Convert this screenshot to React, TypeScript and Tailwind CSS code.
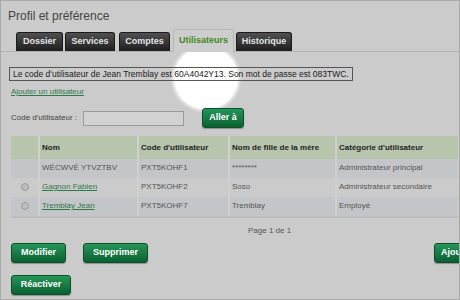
import React from "react";

const tabs = [
  { label: "Dossier", w: "w-[47px]", ml: "ml-0" },
  { label: "Services", w: "w-[50px]", ml: "ml-[2px]" },
  { label: "Comptes", w: "w-[51px]", ml: "ml-[4px]" },
  { label: "Utilisateurs", w: "w-[61px]", ml: "ml-[3px]" },
  { label: "Historique", w: "w-[56px]", ml: "ml-[2px]" },
];

const rows = [
  { radio: false, name: "WÉCWVÉ YTVZTBV", link: false, code: "PXT5KOHF1", mother: "********", cat: "Administrateur principal", shade: true },
  { radio: true, name: "Gagnon Fabien", link: true, code: "PXT5KOHF2", mother: "Soso", cat: "Administrateur secondaire", shade: false },
  { radio: true, name: "Tremblay Jean", link: true, code: "PXT5KOHF7", mother: "Tremblay", cat: "Employé", shade: true },
];

const GreenButton: React.FC<{ label: string; className?: string }> = ({ label, className }) => (
  <button
    className={`h-[20px] shrink-0 rounded-[3px] border border-[#0b4f2b] bg-gradient-to-b from-[#259659] to-[#0a6030] text-[9px] font-bold text-white shadow-[0_1px_1px_rgba(0,0,0,0.3)] ${className ?? ""}`}
  >
    {label}
  </button>
);

export default function App() {
  return (
    <div
      className="relative h-[300px] w-[460px] overflow-hidden border border-[#a9a9a9] bg-[#cbcbcb] text-[#444]"
      style={{ fontFamily: '"Liberation Sans", Arial, sans-serif' }}
    >
      {/* spotlight over the user code */}
      <div className="absolute left-[173px] top-[46px] h-[62px] w-[64px] rounded-full bg-white shadow-[0_0_3px_2px_rgba(255,255,255,0.7)]" />

      <div className="relative">
        <div className="pl-[7px] pt-[7px] text-[12px] leading-[16px] text-[#444]">Profil et préférence</div>

        {/* tabs */}
        <div className="mt-[5px] flex h-[23px] items-end border-b border-[#b3b3b3] pl-[15px]">
          {tabs.map((t) =>
            t.label === "Utilisateurs" ? (
              <div
                key={t.label}
                className={`mb-[-1px] flex h-[23px] shrink-0 items-center justify-center rounded-t-[3px] border border-b-0 border-[#b8b8b8] bg-[#cdcdcd] text-[9px] font-bold text-[#3f8a1c] ${t.w} ${t.ml}`}
              >
                {t.label}
              </div>
            ) : (
              <div
                key={t.label}
                className={`flex h-[19px] shrink-0 items-center justify-center rounded-t-[3px] border border-b-0 border-[#1a1a1a] bg-gradient-to-b from-[#505050] to-[#1f1f1f] text-[9px] font-bold text-[#e4e4e4] ${t.w} ${t.ml}`}
              >
                {t.label}
              </div>
            )
          )}
        </div>

        {/* message */}
        <div className="ml-[8px] mt-[15px] inline-block h-[14px] border border-[#555] px-[3px] text-[8.5px] leading-[12px] text-[#1a1a1a]">
          Le code d'utilisateur de Jean Tremblay est 60A4042Y13. Son mot de passe est 083TWC.
        </div>

        <div className="ml-[10px] mt-[3px] text-[8px] leading-[10px] text-[#2b7a4b] underline">Ajouter un utilisateur</div>

        {/* search */}
        <div className="ml-[10px] mt-[11px] flex h-[20px] items-center">
          <span className="w-[72px] text-[8px] text-[#444]">Code d'utilisateur :</span>
          <div className="h-[15px] w-[101px] border border-[#9a9a9a] bg-[#d2d2d2]" />
          <GreenButton label="Aller à" className="ml-[18px] w-[42px]" />
        </div>

        {/* table */}
        <div className="ml-[10px] mt-[8px] w-[447px] border-b-2 border-[#bdbdbd] text-[8px]">
          <div className="grid h-[23px] grid-cols-[29px_99px_91px_107px_121px] bg-[#b8c5ad] font-bold text-[#1e1e1e]">
            <div className="border-r-2 border-[#d0d0d0]" />
            <div className="flex items-center border-r-2 border-[#d0d0d0] pl-[2px]">Nom</div>
            <div className="flex items-center border-r-2 border-[#d0d0d0] pl-[2px]">Code d'utilisateur</div>
            <div className="flex items-center border-r-2 border-[#d0d0d0] pl-[2px]">Nom de fille de la mère</div>
            <div className="flex items-center pl-[2px]">Catégorie d'utilisateur</div>
          </div>
          {rows.map((r) => (
            <div
              key={r.code}
              className={`grid h-[19px] grid-cols-[29px_99px_91px_107px_121px] text-[#555] ${r.shade ? "bg-[#c4c5c9]" : "bg-[#cbcbcb]"}`}
            >
              <div className="flex items-start justify-center border-r-2 border-[#d0d0d0] pt-[5px]">
                {r.radio && <span className="h-[8px] w-[8px] rounded-full border border-[#9c9c9c] bg-[#bdbdbd]" />}
              </div>
              <div className={`border-r-2 border-[#d0d0d0] pl-[2px] pt-[3px] ${r.link ? "text-[#2b7a4b] underline" : ""}`}>{r.name}</div>
              <div className="border-r-2 border-[#d0d0d0] pl-[2px] pt-[3px]">{r.code}</div>
              <div className="border-r-2 border-[#d0d0d0] pl-[2px] pt-[3px]">{r.mother}</div>
              <div className="pl-[2px] pt-[3px]">{r.cat}</div>
            </div>
          ))}
        </div>

        <div className="ml-[247px] mt-[8px] text-[8px] leading-[10px] text-[#555]">Page 1 de 1</div>

        <div className="ml-[10px] mt-[7px] flex">
          <GreenButton label="Modifier" className="w-[55px]" />
          <GreenButton label="Supprimer" className="ml-[17px] w-[65px]" />
          <GreenButton label="Ajouter" className="ml-[286px] w-[60px] pl-[6px] text-left" />
        </div>
        <div className="ml-[10px] mt-[12px] flex">
          <GreenButton label="Réactiver" className="w-[60px]" />
        </div>
      </div>
    </div>
  );
}
